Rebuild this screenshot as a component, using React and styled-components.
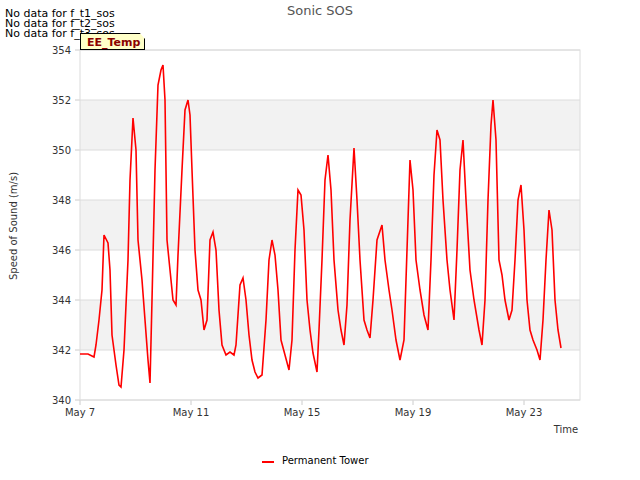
import React from "react";
import styled, { createGlobalStyle } from "styled-components";

const Global = createGlobalStyle`
  html, body { margin: 0; padding: 0; background: #fff; }
  body { font-family: "DejaVu Sans", sans-serif; }
`;

const Page = styled.div`
  position: relative;
  width: 640px;
  height: 480px;
  background: #fff;
`;

const Notes = styled.div`
  position: absolute;
  left: 5px;
  top: 9px;
  display: flex;
  flex-direction: column;
  font-size: 11px;
  line-height: 10px;
  color: #000;
  z-index: 2;
`;

const Badge = styled.div`
  position: absolute;
  left: 80px;
  top: 33px;
  width: 65px;
  height: 17px;
  background: #ffffc8;
  border: 1px solid #000;
  clip-path: polygon(0 0, 92% 0, 100% 35%, 100% 100%, 0 100%);
  color: #8b0000;
  font-weight: bold;
  font-size: 11px;
  line-height: 17px;
  padding-left: 6px;
  box-sizing: border-box;
  z-index: 3;
`;

const pts = [[80,354],[88,354],[94,357],[96,345],[99,320],[102,290],[104,235],[108,243],[110,270],[112,335],[116,365],[119,385],[121,387],[124,350],[128,260],[130,180],[133,118],[136,150],[138,240],[142,280],[145,320],[148,360],[150,383],[152,300],[155,170],[158,85],[161,70],[163,65],[165,100],[167,240],[170,270],[173,300],[176,305],[178,255],[182,170],[185,110],[188,100],[190,115],[192,170],[195,250],[198,290],[201,300],[204,330],[207,320],[210,240],[213,232],[216,250],[219,310],[222,345],[226,355],[230,352],[234,355],[236,345],[240,285],[243,278],[246,300],[249,335],[252,360],[255,372],[258,378],[262,375],[266,320],[269,260],[272,240],[275,255],[278,290],[281,340],[285,355],[289,370],[292,340],[295,250],[298,190],[301,195],[304,230],[307,300],[310,330],[313,353],[317,372],[319,330],[322,260],[325,180],[328,155],[331,190],[334,260],[338,310],[341,330],[344,345],[347,305],[350,220],[354,148],[357,200],[360,260],[364,320],[367,330],[370,338],[373,300],[377,240],[382,225],[385,260],[389,290],[392,310],[396,340],[400,360],[404,340],[407,250],[410,160],[413,190],[416,260],[420,290],[424,315],[428,330],[431,260],[434,175],[437,130],[440,140],[443,200],[447,260],[450,290],[454,320],[457,250],[460,170],[463,140],[466,200],[470,270],[474,300],[479,330],[482,345],[485,300],[488,200],[491,125],[493,100],[496,140],[499,260],[502,275],[505,300],[509,320],[512,310],[515,260],[518,200],[521,185],[524,230],[527,300],[530,330],[533,340],[537,350],[540,360],[543,320],[546,260],[549,210],[552,230],[555,300],[558,330],[561,348]];

const yTicks = [340,342,344,346,348,350,352,354];
const xTicks = [["May 7",80],["May 11",191],["May 15",302],["May 19",413],["May 23",524]];
const yPix = v => 400 - (v - 340) * 25;

export default function App() {
  return (
    <Page>
      <Global />
      <Notes>
        <span>No data for f_t1_sos</span>
        <span>No data for f_t2_sos</span>
        <span>No data for f_t3_sos</span>
      </Notes>
      <Badge>EE_Temp</Badge>
      <svg width="640" height="480" style={{ display: "block" }} fontFamily="DejaVu Sans, sans-serif">
        {[342, 346, 350].map(v => (
          <rect key={v} x="80" y={yPix(v + 2)} width="500" height="50" fill="#f2f2f2" />
        ))}
        {yTicks.map(v => (
          <g key={v}>
            <line x1="80" x2="580" y1={yPix(v)} y2={yPix(v)} stroke="#dcdcdc" />
            <line x1="75" x2="80" y1={yPix(v)} y2={yPix(v)} stroke="#ccc" />
            <text x="71" y={yPix(v) + 4} fontSize="10" fill="#333" textAnchor="end">{v}</text>
          </g>
        ))}
        {xTicks.map(([l, x]) => (
          <g key={l}>
            <line x1={x} x2={x} y1="400" y2="405" stroke="#ccc" />
            <text x={x} y="416" fontSize="10" fill="#333" textAnchor="middle">{l}</text>
          </g>
        ))}
        <rect x="80" y="50" width="500" height="350" fill="none" stroke="#dcdcdc" />
        <polyline points={pts.map(p => p.join(",")).join(" ")} fill="none" stroke="#ff0000" strokeWidth="1.6" />
        <text x="320" y="15" fontSize="13" fill="#555" textAnchor="middle">Sonic SOS</text>
        <text x="566" y="433" fontSize="10" fill="#333" textAnchor="middle">Time</text>
        <text transform="translate(17,226) rotate(-90)" fontSize="10" fill="#333" textAnchor="middle">Speed of Sound (m/s)</text>
        <line x1="262" x2="274" y1="462" y2="462" stroke="#ff0000" strokeWidth="2" />
        <text x="282" y="464" fontSize="10" fill="#000">Permanent Tower</text>
      </svg>
    </Page>
  );
}
